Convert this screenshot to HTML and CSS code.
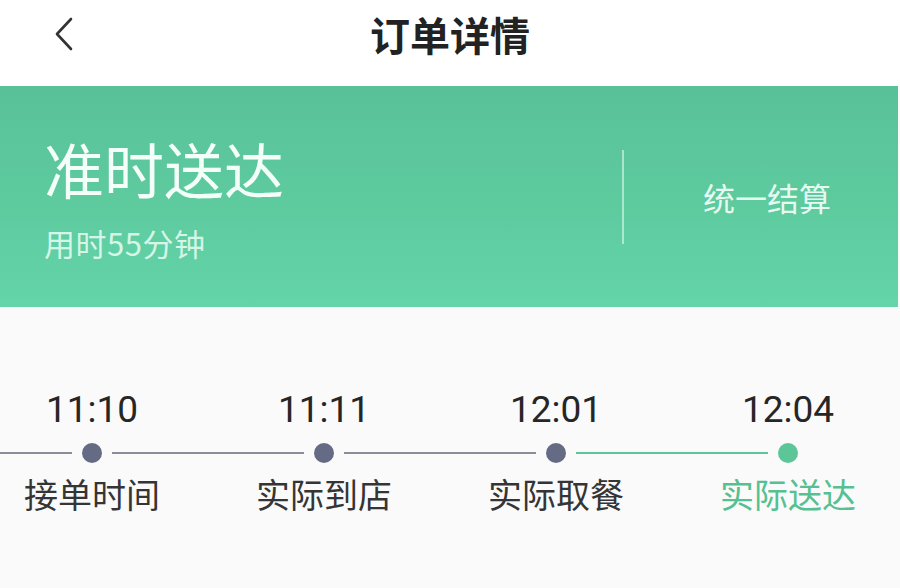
FILE: index.html
```html
<!DOCTYPE html>
<html lang="zh-CN">
<head>
<meta charset="utf-8">
<title>订单详情</title>
<link rel="stylesheet" href="styles.css">
</head>
<body>
<div class="page">
  <header class="header">
    <div class="back">
      <svg width="20" height="34" viewBox="0 0 20 34" aria-hidden="true"><path d="M17 2 L3 17 L17 32" fill="none" stroke="#333" stroke-width="2.6" stroke-linecap="round" stroke-linejoin="round"/></svg>
    </div>
    <h1 class="title">订单详情</h1>
    <div class="spacer"></div>
  </header>

  <section class="banner">
    <div class="banner-left">
      <div class="status">准时送达</div>
      <div class="duration">用时55分钟</div>
    </div>
    <div class="divider"></div>
    <div class="banner-right">统一结算</div>
  </section>

  <section class="content">
    <div class="timeline">
      <div class="step">
        <div class="time">11:10</div>
        <div class="track"><span class="line"></span><span class="dot"></span><span class="line"></span></div>
        <div class="label">接单时间</div>
      </div>
      <div class="step">
        <div class="time">11:11</div>
        <div class="track"><span class="line"></span><span class="dot"></span><span class="line"></span></div>
        <div class="label">实际到店</div>
      </div>
      <div class="step">
        <div class="time">12:01</div>
        <div class="track"><span class="line"></span><span class="dot"></span><span class="line line-green"></span></div>
        <div class="label">实际取餐</div>
      </div>
      <div class="step step-done">
        <div class="time">12:04</div>
        <div class="track"><span class="line line-green"></span><span class="dot dot-green"></span><span class="line line-none"></span></div>
        <div class="label label-green">实际送达</div>
      </div>
    </div>
  </section>
</div>
</body>
</html>
```

FILE: styles.css
```css
* { box-sizing: border-box; }
html, body { margin: 0; padding: 0; }
body {
  width: 900px;
  height: 588px;
  overflow: hidden;
  background: #fafafa;
  font-family: "Noto Sans CJK SC", "Noto Sans", sans-serif;
}
.page { width: 900px; height: 588px; display: flex; flex-direction: column; }

.header {
  height: 86px;
  background: #ffffff;
  display: grid;
  grid-template-columns: 1fr auto 1fr;
  align-items: center;
}
.back { padding-left: 54px; display: flex; align-items: center; padding-bottom: 18px; }
.back svg { display: block; }
.title {
  margin: 0;
  font-size: 40px;
  font-weight: 700;
  color: #222;
  line-height: 1;
  padding-bottom: 18px;
}

.banner {
  height: 221px;
  margin-right: 2px;
  background: linear-gradient(180deg, #59c198 0%, #5ecb9f 55%, #63d5a9 100%);
  display: flex;
  align-items: center;
}
.banner-left {
  flex: 0 0 622px;
  padding-left: 44px;
  display: flex;
  flex-direction: column;
  padding-top: 2px;
}
.status {
  font-size: 60px;
  line-height: 60px;
  color: #f4fffa;
}
.duration {
  margin-top: 30px;
  font-size: 31px;
  line-height: 30px;
  color: rgba(240, 255, 248, 0.82);
  letter-spacing: 0.5px;
}
.divider {
  width: 2px;
  height: 94px;
  background: rgba(235, 255, 246, 0.55);
}
.banner-right {
  flex: 1;
  text-align: center;
  padding-left: 12px;
  font-size: 32px;
  line-height: 32px;
  color: rgba(245, 255, 250, 0.92);
}

.content {
  flex: 1;
  padding-top: 81px;
  overflow: hidden;
}
.timeline {
  display: flex;
  margin-left: -24px;
}
.step {
  flex: 0 0 232px;
  display: flex;
  flex-direction: column;
  align-items: stretch;
}
.time {
  text-align: center;
  font-family: Roboto, "Noto Sans", sans-serif;
  font-size: 37px;
  line-height: 44px;
  color: #262626;
}
.track {
  margin-top: 11px;
  height: 20px;
  display: flex;
  align-items: center;
}
.line {
  flex: 1;
  height: 2px;
  background: #8a8c98;
}
.line-green { background: #5cc59a; }
.line-none { background: transparent; }
.dot {
  flex: 0 0 20px;
  height: 20px;
  margin: 0 10px;
  border-radius: 50%;
  background: #666b85;
}
.dot-green { background: #5cc699; }
.label {
  margin-top: 11px;
  text-align: center;
  font-size: 34px;
  line-height: 40px;
  color: #353535;
}
.label-green { color: #55c091; }
```
